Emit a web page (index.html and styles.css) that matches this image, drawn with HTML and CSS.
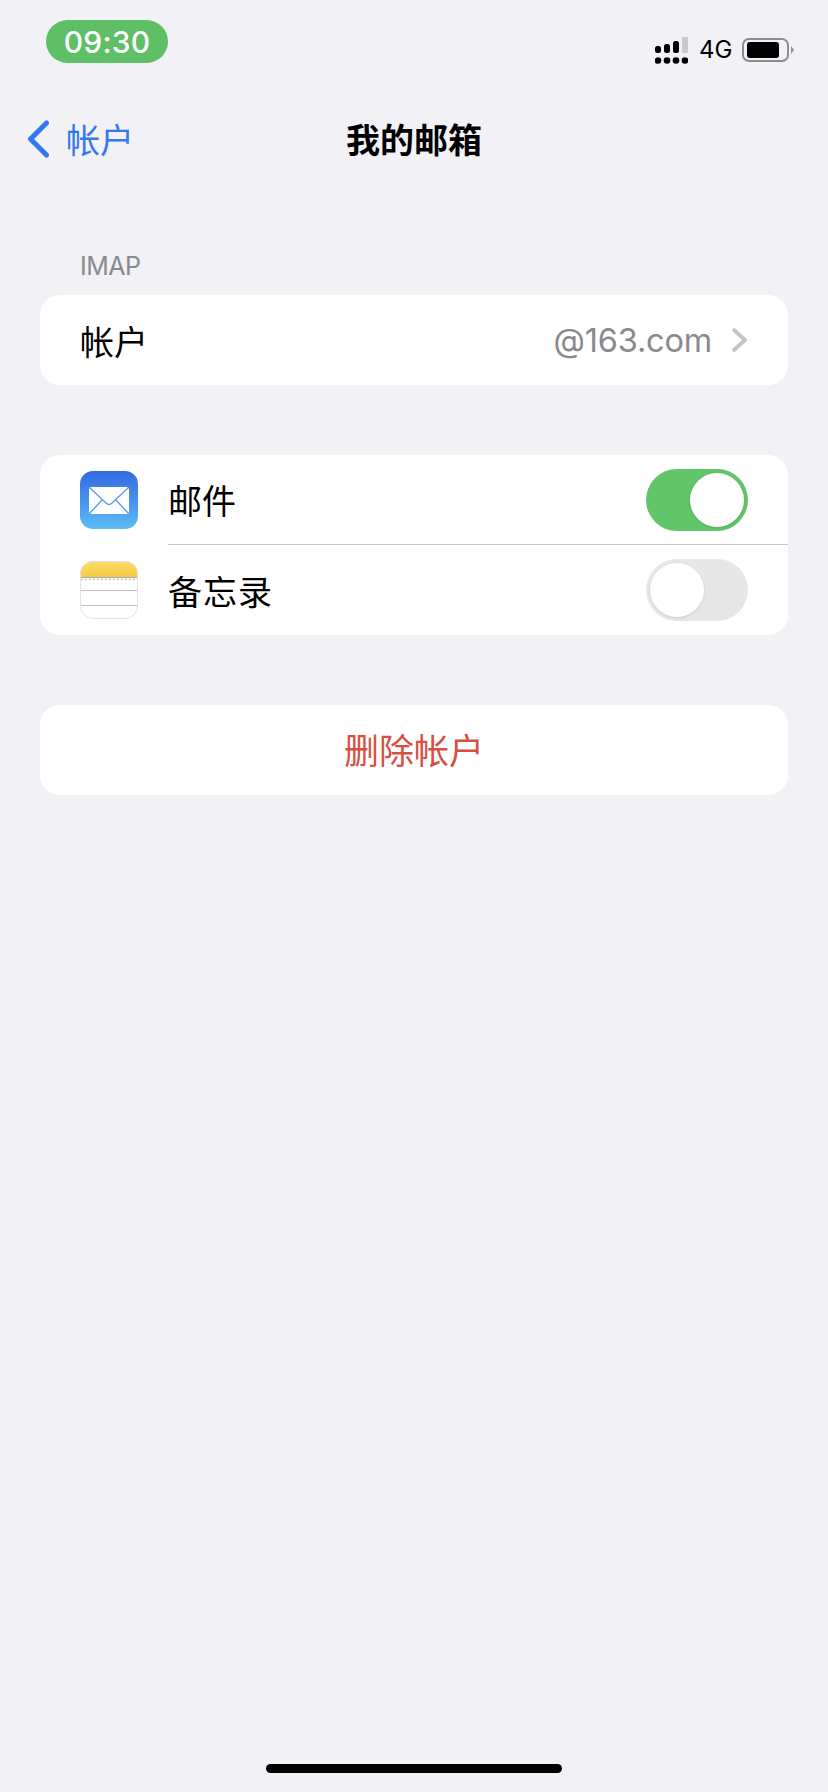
FILE: index.html
```html
<!DOCTYPE html>
<html lang="zh-CN">
<head>
<meta charset="utf-8">
<title>我的邮箱</title>
<link rel="stylesheet" href="styles.css">
</head>
<body>
<div class="screen">
  <header class="status">
    <div class="time">09:30</div>
    <div class="indicators">
      <svg class="signal" width="33" height="27" viewBox="0 0 33 27">
        <rect x="0" y="9" width="6" height="7" rx="2.5" fill="#000"/>
        <rect x="9" y="7" width="6" height="9" rx="2.5" fill="#000"/>
        <rect x="18" y="4" width="6" height="12" rx="2.5" fill="#000"/>
        <rect x="27" y="0" width="6" height="16" rx="1" fill="#c9c9cc"/>
        <circle cx="3" cy="23.5" r="3.3" fill="#000"/>
        <circle cx="12" cy="23.5" r="3.3" fill="#000"/>
        <circle cx="21" cy="23.5" r="3.3" fill="#000"/>
        <circle cx="30" cy="23.5" r="3.3" fill="#000"/>
      </svg>
      <span class="net">4G</span>
      <div class="battery">
        <div class="battery-body"><div class="battery-level"></div></div>
        <div class="battery-nub"></div>
      </div>
    </div>
  </header>

  <nav class="nav">
    <div class="back">
      <svg width="24" height="38" viewBox="0 0 24 38"><path d="M20.5 3 4.5 19l16 16" fill="none" stroke="#3478ee" stroke-width="5" stroke-linecap="round" stroke-linejoin="round"/></svg>
      <span>帐户</span>
    </div>
    <h1 class="title">我的邮箱</h1>
  </nav>

  <main class="content">
    <div class="section-label">IMAP</div>
    <section class="card">
      <div class="row row-account">
        <span class="label">帐户</span>
        <span class="value">@163.com</span>
        <svg class="chevron" width="17" height="26" viewBox="0 0 17 26"><path d="M3 3l11 10L3 23" fill="none" stroke="#c4c4c7" stroke-width="3.800" stroke-linecap="round" stroke-linejoin="round"/></svg>
      </div>
    </section>

    <section class="card card-apps">
      <div class="row row-app">
        <svg class="app-icon" width="58" height="58" viewBox="0 0 58 58">
          <defs><linearGradient id="mailbg" x1="0" y1="0" x2="0" y2="1"><stop offset="0" stop-color="#3469e2"/><stop offset="1" stop-color="#5bbcf6"/></linearGradient></defs>
          <rect width="58" height="58" rx="13" fill="url(#mailbg)"/>
          <rect x="9" y="16" width="40" height="27" rx="2.500" fill="#fff"/>
          <path d="M9.500 16.500 26 32q3 2.800 6 0l16.500-15.500M9.500 42.500 22 29M48.500 42.500 36 29" fill="none" stroke="#5a9fe9" stroke-width="1.400"/>
        </svg>
        <div class="app-main">
          <span class="label">邮件</span>
          <div class="switch switch-on"><div class="knob"></div></div>
        </div>
      </div>
      <div class="row row-app">
        <svg class="app-icon" width="58" height="58" viewBox="0 0 58 58">
          <defs><clipPath id="noteclip"><rect width="58" height="58" rx="13"/></clipPath><linearGradient id="notebg" x1="0" y1="0" x2="0" y2="1"><stop offset="0" stop-color="#fbdd6e"/><stop offset="1" stop-color="#f7cb3c"/></linearGradient></defs>
          <g clip-path="url(#noteclip)">
            <rect width="58" height="58" fill="#fff"/>
            <rect width="58" height="16" fill="url(#notebg)"/>
            <path d="M0 16.500h58" stroke="#a9a9a9" stroke-width="1"/>
            <path d="M1 18.500h57" stroke="#b5b5b5" stroke-width="1.500" stroke-dasharray="1.500 2.500"/>
            <path d="M0 29.500h58M0 44.500h58" stroke="#c2c2c2" stroke-width="1"/>
          </g>
          <rect x=".5" y=".5" width="57" height="57" rx="12.500" fill="none" stroke="#e4e4e6"/>
        </svg>
        <div class="app-main app-main-last">
          <span class="label label-wide">备忘录</span>
          <div class="switch switch-off"><div class="knob"></div></div>
        </div>
      </div>
    </section>

    <section class="card card-delete">
      <div class="row row-delete">删除帐户</div>
    </section>
  </main>

  <div class="home-indicator"></div>
</div>
</body>
</html>
```

FILE: styles.css
```css
* { box-sizing: border-box; }
html, body { margin: 0; padding: 0; }
body {
  background: #f1f1f6;
  font-family: "Noto Sans CJK SC", "Noto Sans", sans-serif;
  color: #000;
}
.screen {
  width: 828px;
  height: 1792px;
  display: flex;
  flex-direction: column;
}
.status {
  height: 100px;
  display: flex;
  justify-content: space-between;
  align-items: flex-start;
  padding: 20px 34px 0 46px;
}
.time {
  width: 122px;
  height: 43px;
  border-radius: 22px;
  background: #5fbf67;
  color: #fff;
  font: 500 30px/45px Inter, sans-serif;
  letter-spacing: .2px;
  text-align: center;
}
.indicators {
  display: flex;
  align-items: center;
  margin-top: 16px;
}
.signal { display: block; }
.net {
  margin-left: 11px;
  font: 400 24px/28px Inter, sans-serif;
  color: #000;
  width: 33px;
}
.battery {
  margin-left: 10px;
  display: flex;
  align-items: center;
}
.battery-body {
  width: 47px;
  height: 24px;
  border: 2px solid #8d8d90;
  border-radius: 7px;
  padding: 2px 3px;
}
.battery-level {
  width: 32px;
  height: 16px;
  background: #000;
  border-radius: 3px;
}
.battery-nub {
  margin-left: 2px;
  width: 0;
  height: 0;
  border-left: 3px solid #8d8d90;
  border-top: 4px solid transparent;
  border-bottom: 4px solid transparent;
}
.nav {
  height: 80px;
  position: relative;
  display: flex;
  align-items: flex-start;
  justify-content: center;
  padding-top: 16px;
}
.back {
  position: absolute;
  left: 26px;
  top: 20px;
  height: 38px;
  display: flex;
  align-items: center;
  gap: 16px;
  color: #3478ee;
  font-size: 34px;
  line-height: 38px;
}
.back svg { display: block; }
.title {
  margin: 0;
  font-size: 34px;
  font-weight: 700;
  line-height: 46px;
}
.content {
  padding: 71px 40px 0;
  display: flex;
  flex-direction: column;
}
.section-label {
  padding-left: 40px;
  height: 44px;
  font: 400 25px/30px Inter, sans-serif;
  letter-spacing: -.5px;
  color: #8a8a8e;
}
.card {
  background: #fff;
  border-radius: 20px;
  overflow: hidden;
}
.card-apps { margin-top: 70px; }
.card-delete { margin-top: 70px; }
.row {
  display: flex;
  align-items: center;
}
.row-account {
  height: 90px;
  padding: 0 40px 0 40px;
}
.label {
  font-size: 34px;
  line-height: 44px;
  padding-top: 1px;
}
.label-wide { letter-spacing: 1px; }
.value {
  margin-left: auto;
  font: 400 32.500px/44px Inter, sans-serif;
  letter-spacing: -.2px;
  color: #8a8a8e;
  padding-top: 1px;
}
.chevron {
  margin-left: 19px;
  display: block;
}
.row-app {
  height: 90px;
  padding-left: 40px;
  gap: 30px;
}
.app-icon {
  display: block;
  flex: none;
}
.app-main {
  flex: 1;
  height: 100%;
  display: flex;
  align-items: center;
  justify-content: space-between;
  padding-right: 40px;
  border-bottom: 1px solid #c8c8ca;
}
.app-main-last { border-bottom: 0; }
.switch {
  width: 102px;
  height: 62px;
  border-radius: 31px;
  padding: 4px;
  display: flex;
}
.switch-on {
  background: #62c56a;
  justify-content: flex-end;
}
.switch-off {
  background: #e7e7e8;
  justify-content: flex-start;
}
.knob {
  width: 54px;
  height: 54px;
  border-radius: 50%;
  background: #fff;
  box-shadow: 0 1px 3px rgba(0, 0, 0, .12);
}
.row-delete {
  height: 90px;
  justify-content: center;
  color: #d94e40;
  font-size: 35px;
  padding-bottom: 4px;
}
.home-indicator {
  width: 296px;
  height: 9px;
  border-radius: 5px;
  background: #000;
  margin: auto auto 19px;
}
```
